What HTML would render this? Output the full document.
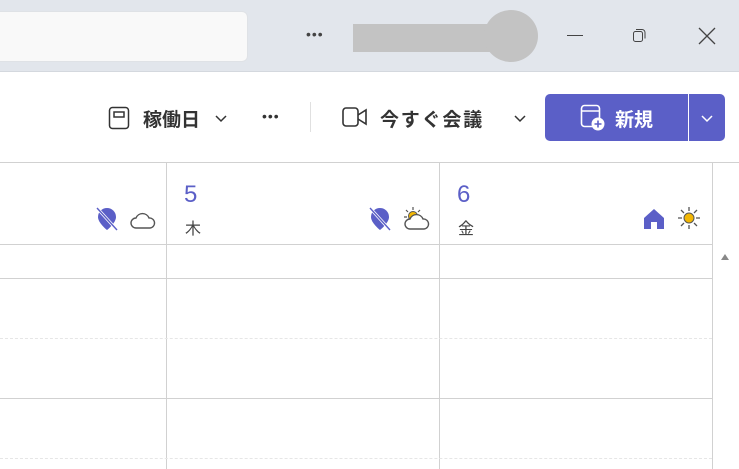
<html><head><style>
body{margin:0;width:739px;height:469px;overflow:hidden;background:#fff;font-family:"Liberation Sans","Noto Sans CJK JP",sans-serif;position:relative}
.a{position:absolute}
.hl{position:absolute;height:1px;background:#d1d1d1}
.dl{position:absolute;height:0;border-top:1px dashed #e6e6e6}
.vl{position:absolute;width:1px;background:#d1d1d1}
</style></head><body>
<div class="a" style="left:0;top:0;width:739px;height:71px;background:#e2e6ec;border-bottom:1px solid #d4d8de"></div>
<div class="a" style="left:-10px;top:11px;width:256px;height:49px;background:#f9f9f9;border-radius:6px;border:1px solid #dfe2e6"></div>
<div class="a" style="left:306px;top:26px;font-size:14px;color:#444;letter-spacing:1px">•••</div>
<div class="a" style="left:353px;top:24px;width:140px;height:28px;background:#c3c3c3"></div>
<div class="a" style="left:484px;top:10px;width:54px;height:52px;border-radius:50%;background:#c3c3c3"></div>
<div class="a" style="left:567px;top:35px;width:16px;height:1px;background:#444"></div>
<svg class="a" style="left:632px;top:27px" width="16" height="16"><rect x="1.5" y="4.5" width="9" height="10" rx="2" fill="none" stroke="#444"/><path d="M4 2.5h6a3 3 0 0 1 3 3v6" fill="none" stroke="#444"/></svg>
<svg class="a" style="left:698px;top:27px" width="18" height="18"><path d="M1 1L17 17M17 1L1 17" stroke="#444" stroke-width="1.3"/></svg>

<svg class="a" style="left:108px;top:106px" width="22" height="24"><rect x="1.5" y="1.5" width="19" height="21" rx="3" fill="none" stroke="#333" stroke-width="1.5"/><rect x="6" y="6" width="10" height="5" fill="none" stroke="#333" stroke-width="1.5"/></svg>
<div class="a" style="left:143px;top:105px;font-size:19px;font-weight:bold;color:#333">稼働日</div>
<svg class="a" style="left:214px;top:114px" width="14" height="10"><path d="M2 2l5 5 5-5" fill="none" stroke="#333" stroke-width="1.5"/></svg>
<div class="a" style="left:262px;top:108px;font-size:14px;color:#333;letter-spacing:1px">•••</div>
<div class="vl" style="left:310px;top:102px;height:30px;background:#e0e0e0"></div>
<svg class="a" style="left:342px;top:107px" width="26" height="20"><rect x="1" y="1" width="15" height="18" rx="3" fill="none" stroke="#333" stroke-width="1.6"/><path d="M16 8l8-5v14l-8-5" fill="none" stroke="#333" stroke-width="1.6"/></svg>
<div class="a" style="left:380px;top:105px;font-size:19px;font-weight:bold;color:#333;letter-spacing:1.8px">今すぐ会議</div>
<svg class="a" style="left:513px;top:114px" width="14" height="10"><path d="M2 2l5 5 5-5" fill="none" stroke="#333" stroke-width="1.5"/></svg>
<div class="a" style="left:545px;top:94px;width:180px;height:47px;background:#5b5fc7;border-radius:5px"></div>
<div class="a" style="left:688px;top:94px;width:1px;height:47px;background:#fff"></div>
<svg class="a" style="left:580px;top:104px" width="26" height="28"><rect x="1.5" y="1.5" width="18" height="21" rx="3" fill="none" stroke="#fff" stroke-width="1.6"/><path d="M1.5 7h18" stroke="#fff" stroke-width="1.6"/><circle cx="18" cy="20" r="6.5" fill="#fff"/><path d="M18 16.5v7M14.5 20h7" stroke="#5b5fc7" stroke-width="1.6"/></svg>
<div class="a" style="left:615px;top:105px;font-size:19px;font-weight:bold;color:#fff">新規</div>
<svg class="a" style="left:700px;top:114px" width="14" height="10"><path d="M2 2l5 5 5-5" fill="none" stroke="#fff" stroke-width="1.5"/></svg>

<div class="hl" style="left:0;top:162px;width:739px"></div>
<div class="vl" style="left:166px;top:162px;height:307px"></div>
<div class="vl" style="left:439px;top:162px;height:307px"></div>
<div class="vl" style="left:712px;top:162px;height:307px"></div>
<div class="hl" style="left:0;top:244px;width:712px"></div>
<div class="hl" style="left:0;top:278px;width:712px"></div>
<div class="dl" style="left:0;top:338px;width:712px"></div>
<div class="hl" style="left:0;top:398px;width:712px"></div>
<div class="dl" style="left:0;top:458px;width:712px"></div>
<div class="a" style="left:721px;top:254px;width:0;height:0;border-left:4px solid transparent;border-right:4px solid transparent;border-bottom:6px solid #888"></div>

<div class="a" style="left:184px;top:181px;font-size:24px;color:#5b5fc7">5</div>
<div class="a" style="left:185px;top:215px;font-size:16px;color:#444">木</div>
<div class="a" style="left:457px;top:181px;font-size:24px;color:#5b5fc7">6</div>
<div class="a" style="left:458px;top:215px;font-size:16px;color:#444">金</div>

<svg class="a" style="left:95px;top:206px" width="24" height="26"><path d="M12 2a9 9 0 0 1 9 9c0 6-9 13-9 13S3 17 3 11a9 9 0 0 1 9-9z" fill="#5b5fc7"/><path d="M2 2l20 22" stroke="#fff" stroke-width="3"/><path d="M2 2l20 22" stroke="#5b5fc7" stroke-width="1.4"/></svg>
<svg class="a" style="left:129px;top:210px" width="28" height="20"><path d="M7 18a5 5 0 0 1 0-10 7 7 0 0 1 13 0 5 5 0 0 1 1 10z" fill="none" stroke="#555" stroke-width="1.4"/></svg>
<svg class="a" style="left:368px;top:206px" width="24" height="26"><path d="M12 2a9 9 0 0 1 9 9c0 6-9 13-9 13S3 17 3 11a9 9 0 0 1 9-9z" fill="#5b5fc7"/><path d="M2 2l20 22" stroke="#fff" stroke-width="3"/><path d="M2 2l20 22" stroke="#5b5fc7" stroke-width="1.4"/></svg>
<svg class="a" style="left:402px;top:205px" width="30" height="26"><circle cx="11" cy="11" r="4.5" fill="#f2b705" stroke="#555" stroke-width="1"/><path d="M11 2v3M4 5l2 2M2 12h3M18 5l-2 2" stroke="#555" stroke-width="1.2"/><path d="M8 24a5 5 0 0 1 0-10 7 7 0 0 1 13 0 5 5 0 0 1 1 10z" fill="#fff" stroke="#555" stroke-width="1.4"/></svg>
<svg class="a" style="left:642px;top:207px" width="24" height="24"><path d="M12 2l10 9v11h-7v-7h-6v7H2V11z" fill="#5b5fc7"/></svg>
<svg class="a" style="left:677px;top:206px" width="24" height="24"><circle cx="12" cy="12" r="5" fill="#f2b705" stroke="#555" stroke-width="1"/><path d="M12 1v4M12 19v4M1 12h4M19 12h4M4 4l3 3M17 17l3 3M20 4l-3 3M7 17l-3 3" stroke="#555" stroke-width="1.3"/></svg>
</body></html>
